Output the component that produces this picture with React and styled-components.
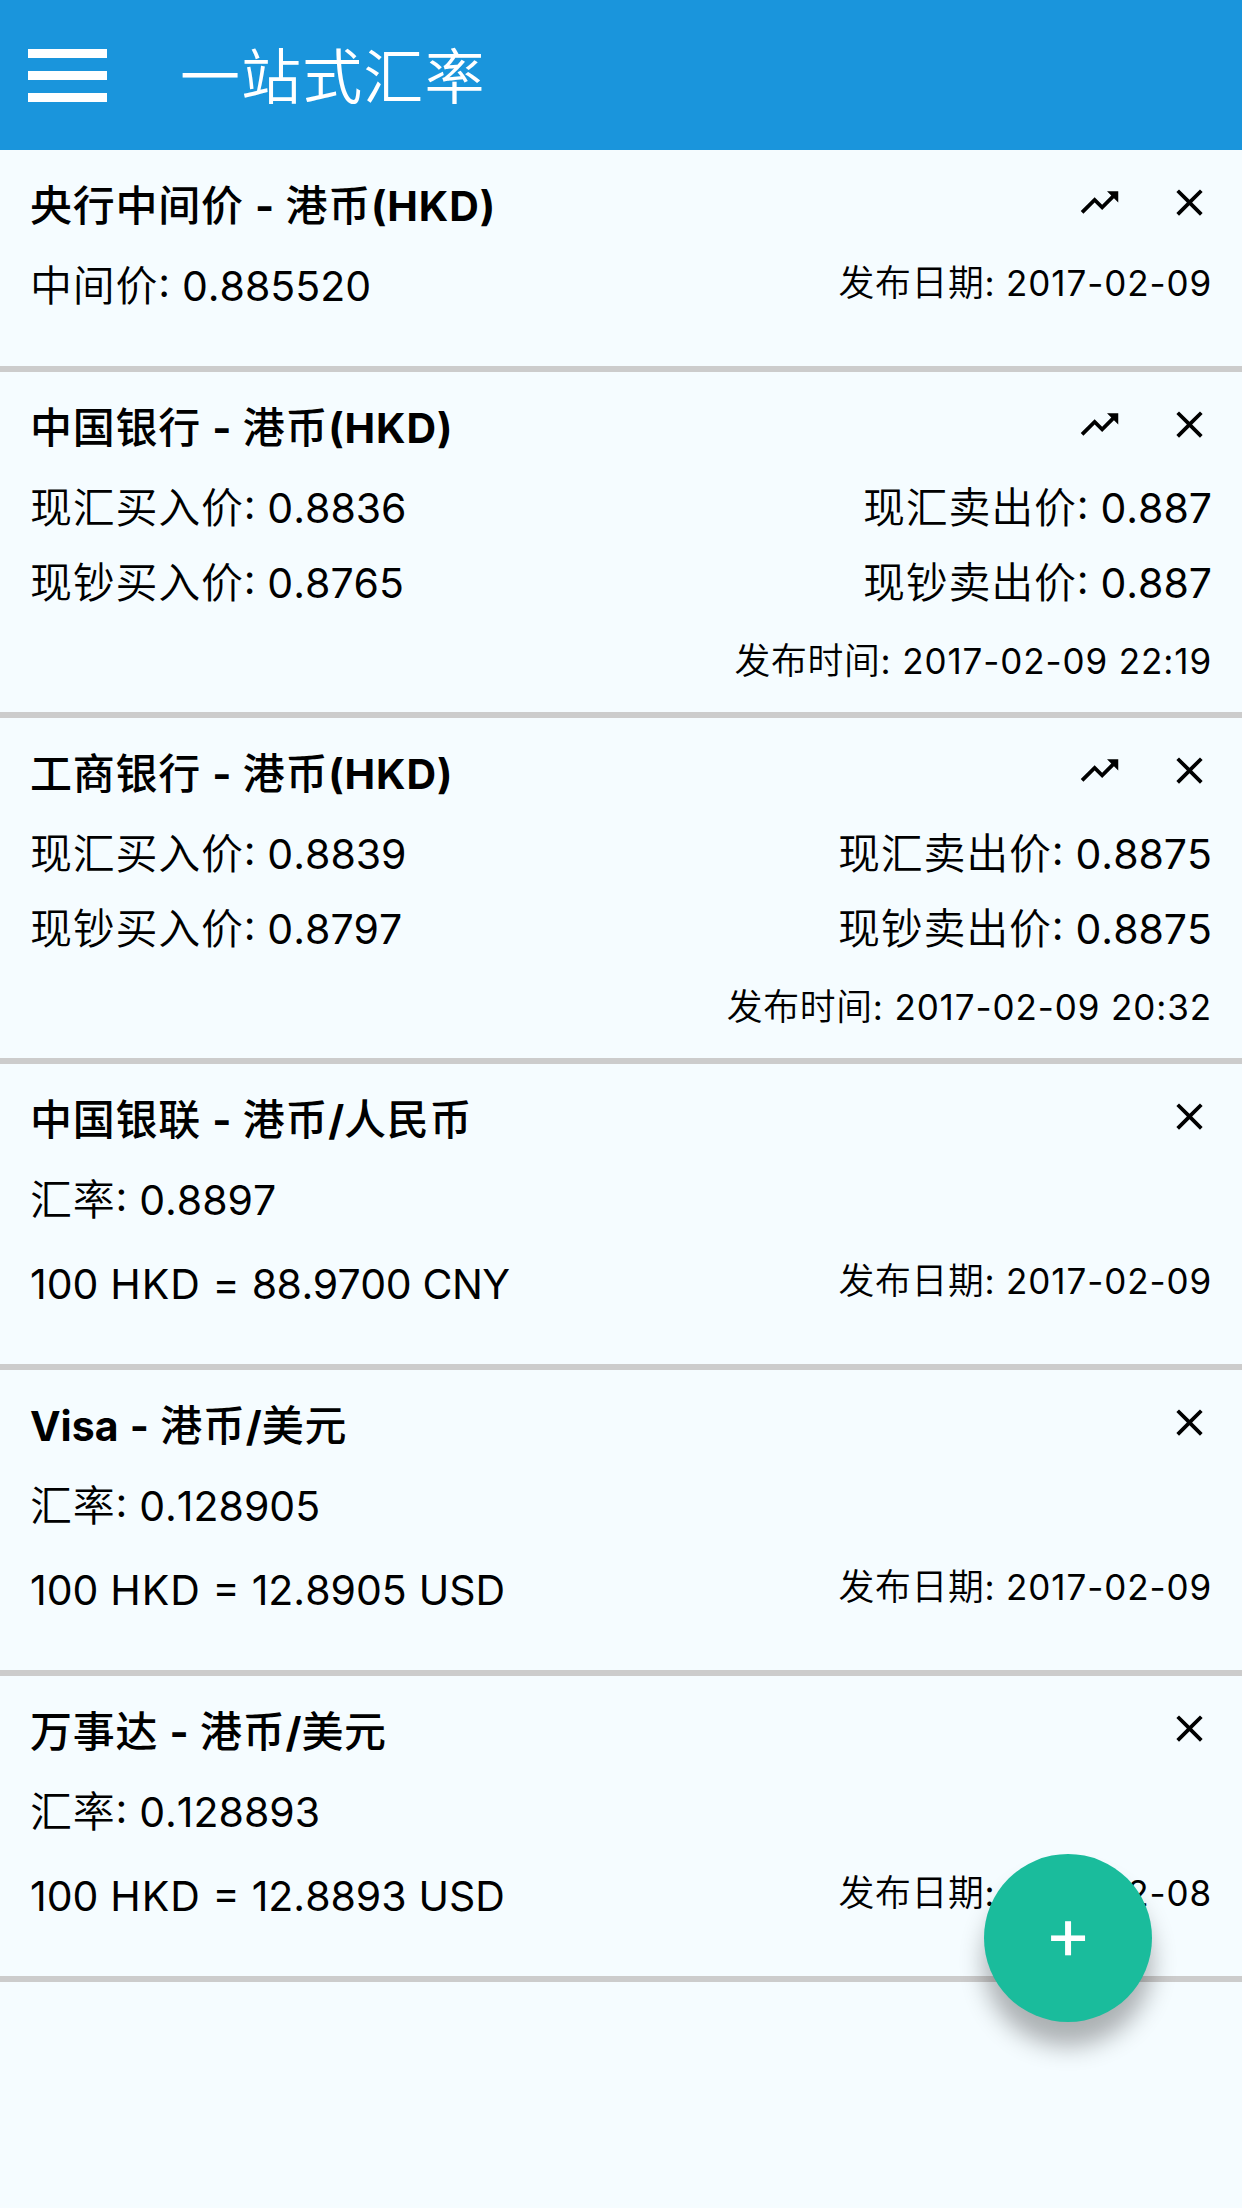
import React from "react";

// Imports for styling
import styled, { createGlobalStyle } from "styled-components";

// Imports of icons
import { MdClose, MdTrendingUp } from "react-icons/md";

const rates = [
  {
    title: "央行中间价 - 港币(HKD)",
    chart: true,
    rows: [{ left: "中间价: 0.885520", date: "发布日期: 2017-02-09" }],
    height: 222,
  },
  {
    title: "中国银行 - 港币(HKD)",
    chart: true,
    rows: [
      { left: "现汇买入价: 0.8836", right: "现汇卖出价: 0.887" },
      { left: "现钞买入价: 0.8765", right: "现钞卖出价: 0.887" },
    ],
    time: "发布时间: 2017-02-09 22:19",
    height: 346,
  },
  {
    title: "工商银行 - 港币(HKD)",
    chart: true,
    rows: [
      { left: "现汇买入价: 0.8839", right: "现汇卖出价: 0.8875" },
      { left: "现钞买入价: 0.8797", right: "现钞卖出价: 0.8875" },
    ],
    time: "发布时间: 2017-02-09 20:32",
    height: 346,
  },
  {
    title: "中国银联 - 港币/人民币",
    rows: [
      { left: "汇率: 0.8897" },
      { left: "100 HKD = 88.9700 CNY", date: "发布日期: 2017-02-09", gap: 9 },
    ],
    height: 306,
  },
  {
    title: "Visa - 港币/美元",
    rows: [
      { left: "汇率: 0.128905" },
      { left: "100 HKD = 12.8905 USD", date: "发布日期: 2017-02-09", gap: 9 },
    ],
    height: 306,
  },
  {
    title: "万事达 - 港币/美元",
    rows: [
      { left: "汇率: 0.128893" },
      { left: "100 HKD = 12.8893 USD", date: "发布日期: 2017-02-08", gap: 9 },
    ],
    height: 306,
  },
];

// Chinese runs get their own font, currency codes their own tracking
const Mixed = ({ children }) =>
  children
    .split(/([\u4e00-\u9fff]+|\(?HKD\)?|88\.9700 CNY)/)
    .filter(Boolean)
    .map((run, i) => {
      if (/[\u4e00-\u9fff]/.test(run)) return <Hanzi key={i}>{run}</Hanzi>;
      if (/HKD/.test(run)) return <Code key={i}>{run}</Code>;
      if (/CNY/.test(run)) {
        return (
          <Code key={i} $tight>
            {run}
          </Code>
        );
      }
      return run;
    });

const RateCard = ({ rate }) => (
  <StyledCard $height={rate.height}>
    <CardHeader>
      <CardTitle>
        <Mixed>{rate.title}</Mixed>
      </CardTitle>
      <CardActions>
        {rate.chart && (
          <IconButton aria-label="走势">
            <MdTrendingUp />
          </IconButton>
        )}
        <IconButton aria-label="删除">
          <MdClose />
        </IconButton>
      </CardActions>
    </CardHeader>
    {rate.rows.map((row) => (
      <RateRow key={row.left} $gap={row.gap}>
        <RateText>
          <Mixed>{row.left}</Mixed>
        </RateText>
        {row.right && (
          <RateText>
            <Mixed>{row.right}</Mixed>
          </RateText>
        )}
        {row.date && (
          <PublishDate>
            <Mixed>{row.date}</Mixed>
          </PublishDate>
        )}
      </RateRow>
    ))}
    {rate.time && (
      <PublishTime>
        <Mixed>{rate.time}</Mixed>
      </PublishTime>
    )}
  </StyledCard>
);

const App = () => {
  return (
    <React.Fragment>
      <GlobalStyle />
      <Screen>
        <TopBar>
          <MenuButton aria-label="菜单">
            <MenuLine />
            <MenuLine />
            <MenuLine />
          </MenuButton>
          <AppTitle>一站式汇率</AppTitle>
        </TopBar>
        {rates.map((rate) => (
          <RateCard key={rate.title} rate={rate} />
        ))}
        <AddButton>+</AddButton>
      </Screen>
    </React.Fragment>
  );
};

// Styled components
const GlobalStyle = createGlobalStyle`
  * {
    box-sizing: border-box;
  }
  body {
    margin: 0;
    background: #f5fcff;
  }
  button {
    border: none;
    padding: 0;
    background: none;
    font: inherit;
    color: inherit;
  }
`;

const Screen = styled.div`
  position: relative;
  width: 1242px;
  height: 2208px;
  overflow: hidden;
  background: #f5fcff;
  color: #000;
  font-family: Inter, "Noto Sans CJK SC", sans-serif;
  font-kerning: none;
`;

const TopBar = styled.header`
  display: flex;
  align-items: center;
  height: 150px;
  padding-left: 28px;
  background: #1a95dc;
`;

const MenuButton = styled.button`
  display: flex;
  flex-direction: column;
  gap: 13px;
  width: 79px;
`;

const MenuLine = styled.span`
  height: 9px;
  background: #fff;
`;

const AppTitle = styled.h1`
  margin: 0 0 0 73px;
  padding-bottom: 5px;
  color: #fff;
  font-family: "Noto Sans CJK SC", sans-serif;
  font-size: 60px;
  font-weight: 350;
  line-height: 90px;
  letter-spacing: 1.1px;
`;

const StyledCard = styled.section`
  height: ${(props) => props.$height}px;
  padding: 30px 30px 0;
  border-bottom: 6px solid #ccc;
`;

const CardHeader = styled.div`
  display: flex;
  justify-content: space-between;
  height: 50px;
  margin-bottom: 19px;
`;

const Hanzi = styled.span`
  font-family: "Noto Sans CJK SC", sans-serif;
  font-size: 1.024em;
  letter-spacing: 0.018em;
  line-height: 0;
`;

const Code = styled.span`
  letter-spacing: ${(props) => (props.$tight ? "-0.5px" : "0.9px")};
`;

const CardTitle = styled.h2`
  margin: 0;
  font-size: 41px;
  font-weight: 700;
  line-height: 52px;
  word-spacing: 1.6px;
  white-space: pre;
  ${Hanzi} {
    font-weight: 500;
  }
`;

const CardActions = styled.div`
  display: flex;
  gap: 45px;
  margin-right: 0.5px;
  svg {
    display: block;
    width: 45px;
    height: 45px;
  }
`;

const IconButton = styled.button`
  height: 45px;
`;

const RateRow = styled.div`
  display: flex;
  justify-content: space-between;
  align-items: center;
  height: 75px;
  margin-top: ${(props) => props.$gap || 0}px;
`;

const RateText = styled.span`
  font-size: 41px;
  line-height: 75px;
  word-spacing: 0.4px;
  white-space: pre;
  ${Hanzi} {
    font-weight: 350;
  }
`;

const PublishDate = styled.span`
  padding-bottom: 7px;
  font-size: 35px;
  line-height: 60px;
  letter-spacing: 0.9px;
  white-space: pre;
  ${Hanzi} {
    font-weight: 350;
  }
`;

const PublishTime = styled(PublishDate)`
  display: block;
  margin-top: 10px;
  text-align: right;
`;

const AddButton = styled.button`
  position: absolute;
  right: 90px;
  bottom: 186px;
  width: 168px;
  height: 168px;
  padding-bottom: 11px;
  border-radius: 50%;
  background: #1abc9c;
  box-shadow: 0 24px 24px rgba(0, 0, 0, 0.3);
  color: #fff;
  font-size: 72px;
  line-height: 157px;
`;

export default App;
